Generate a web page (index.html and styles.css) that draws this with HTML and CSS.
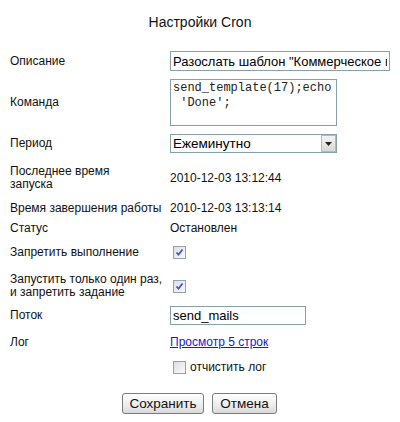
FILE: index.html
```html
<!DOCTYPE html>
<html lang="ru">
<head>
<meta charset="utf-8">
<title>Настройки Cron</title>
<link rel="stylesheet" href="styles.css">
</head>
<body>
<div class="page">
  <h1 class="title">Настройки Cron</h1>
  <div class="form">
    <div class="lbl">Описание</div>
    <div class="val"><input class="txt wide" type="text" value="Разослать шаблон &quot;Коммерческое предложение&quot;"></div>

    <div class="lbl">Команда</div>
    <div class="val"><textarea class="area">send_template(17);echo
 'Done';</textarea></div>

    <div class="lbl">Период</div>
    <div class="val">
      <div class="sel">
        <span class="sel-text">Ежеминутно</span>
        <span class="sel-btn"><svg width="7" height="4" viewBox="0 0 7 4"><path d="M0 0h7L3.5 4z" fill="#222"/></svg></span>
      </div>
    </div>

    <div class="lbl">Последнее время<br>запуска</div>
    <div class="val">2010-12-03 13:12:44</div>

    <div class="lbl">Время завершения работы</div>
    <div class="val">2010-12-03 13:13:14</div>

    <div class="lbl">Статус</div>
    <div class="val">Остановлен</div>

    <div class="lbl">Запретить выполнение</div>
    <div class="val"><span class="cb"><svg width="9" height="9" viewBox="0 0 9 9"><path d="M1.5 4.5l2 2.2L7.5 1.5" fill="none" stroke="#4a4ec8" stroke-width="1.8"/></svg></span></div>

    <div class="lbl">Запустить только один раз,<br>и запретить задание</div>
    <div class="val"><span class="cb"><svg width="9" height="9" viewBox="0 0 9 9"><path d="M1.5 4.5l2 2.2L7.5 1.5" fill="none" stroke="#4a4ec8" stroke-width="1.8"/></svg></span></div>

    <div class="lbl">Поток</div>
    <div class="val"><input class="txt short" type="text" value="send_mails"></div>

    <div class="lbl">Лог</div>
    <div class="val"><a class="link" href="#">Просмотр 5 строк</a></div>

    <div class="lbl"></div>
    <div class="val check-row"><span class="cb"></span><span>отчистить лог</span></div>
  </div>
  <div class="buttons">
    <button class="btn save" type="button">Сохранить</button>
    <button class="btn cancel" type="button">Отмена</button>
  </div>
</div>
</body>
</html>
```
FILE: styles.css
```css
html, body {
  margin: 0;
  padding: 0;
  background: #fff;
}
body {
  font-family: "Liberation Sans", Arial, sans-serif;
  font-size: 12px;
  color: #111;
}
.page {
  padding: 0 10px;
}
.title {
  margin: 0 0 17px;
  padding-top: 14px;
  font-size: 14px;
  line-height: 16px;
  font-weight: normal;
  text-align: center;
  color: #111;
}
.form {
  display: grid;
  grid-template-columns: 160px 1fr;
  grid-template-rows: 28px 55px 27px 42px 18px 22px 27px 40px 19px 34px 16px;
  align-items: center;
  line-height: 13px;
}
.lbl, .val {
  display: flex;
  align-items: center;
}
.lbl {
  display: block;
}
.txt {
  box-sizing: border-box;
  border: 1px solid #86a2a6;
  padding: 0 2px;
  margin: 0;
  font-family: "Liberation Sans", Arial, sans-serif;
  font-size: 13px;
  color: #000;
  background: #fff;
  outline: none;
}
.wide {
  width: 220px;
  height: 20px;
}
.short {
  width: 136px;
  height: 19px;
}
.area {
  box-sizing: border-box;
  width: 167px;
  height: 47px;
  border: 1px solid #86a2a6;
  padding: 1px 2px;
  margin: 0;
  font-family: "Liberation Mono", "Courier New", monospace;
  font-size: 12px;
  line-height: 15px;
  color: #222;
  resize: none;
  overflow: hidden;
  white-space: pre;
  outline: none;
}
.sel {
  box-sizing: border-box;
  width: 167px;
  height: 19px;
  border: 1px solid #86a2a6;
  display: flex;
  align-items: center;
  justify-content: space-between;
  background: #fff;
}
.sel-text {
  padding-left: 2px;
  font-size: 13.5px;
  color: #000;
}
.sel-btn {
  box-sizing: border-box;
  width: 15px;
  height: 17px;
  border: 1px solid #b8b8b8;
  background: linear-gradient(#f4f4f4, #d8d8d8);
  display: flex;
  align-items: center;
  justify-content: center;
}
.cb {
  box-sizing: border-box;
  width: 13px;
  height: 13px;
  margin-left: 3px;
  border: 1px solid #8ea4b8;
  background: linear-gradient(135deg, #dedede, #fafafa);
  display: inline-flex;
  align-items: center;
  justify-content: center;
}
.check-row {
  gap: 4px;
}
.link {
  color: #1a1acc;
  text-decoration: underline;
}
.buttons {
  display: flex;
  justify-content: center;
  gap: 8px;
  margin-top: 18px;
  padding-right: 1px;
}
.btn {
  box-sizing: border-box;
  height: 21px;
  border: 1px solid #7b7b7b;
  border-radius: 3px;
  background: linear-gradient(#ffffff, #ececec 60%, #d9d9d9);
  font-family: "Liberation Sans", Arial, sans-serif;
  font-size: 13.5px;
  color: #111;
  padding: 0;
  margin: 0;
}
.save {
  width: 82px;
}
.cancel {
  width: 65px;
}
```
